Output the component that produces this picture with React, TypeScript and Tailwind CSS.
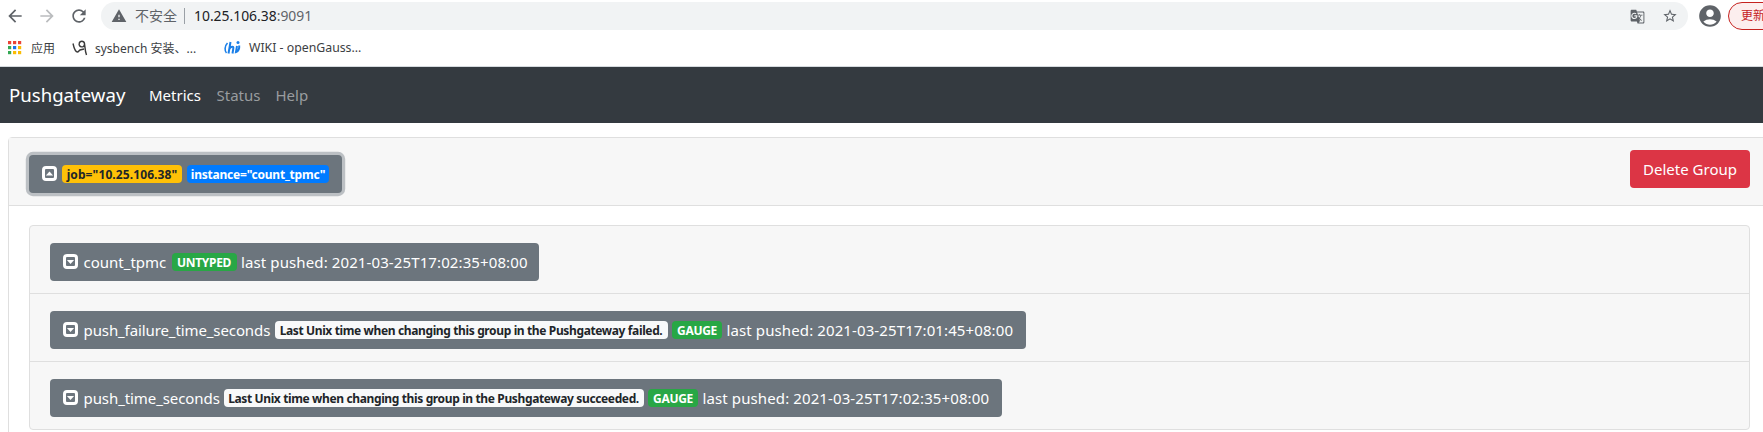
import { MdAccountCircle, MdArrowBack, MdArrowForward, MdGTranslate, MdRefresh, MdStarBorder, MdWarning } from "react-icons/md";

const latin = "font-['Noto_Sans','Noto_Sans_CJK_SC',sans-serif]";

function Caret({ up = false }: { up?: boolean }) {
  return (
    <svg viewBox="0 0 15 15" className="mb-px h-[15px] w-[15px] shrink-0">
      <rect x="1.5" y="1.5" width="12" height="12" rx="2.5" fill="none" stroke="#fff" strokeWidth="3" />
      <path d={up ? "M3.9 9.4h7.2L7.5 5.4z" : "M3.9 6h7.2L7.5 10z"} fill="#fff" />
    </svg>
  );
}

function Badge({ children, className }: { children: string; className: string }) {
  return (
    <span className={`flex h-[18px] shrink-0 items-center justify-center rounded-[4px] pt-px text-[12px] leading-none font-bold ${className}`}>
      {children}
    </span>
  );
}

const metrics = [
  { name: "count_tpmc", nameClass: "w-[88px]", help: "", helpClass: "", type: "UNTYPED", typeClass: "w-[65px]", time: "2021-03-25T17:02:35+08:00", width: "w-[489px]" },
  { name: "push_failure_time_seconds", nameClass: "w-[191px] tracking-[-0.1px]", help: "Last Unix time when changing this group in the Pushgateway failed.", helpClass: "w-[393px]", type: "GAUGE", typeClass: "w-[50px]", time: "2021-03-25T17:01:45+08:00", width: "w-[976px]" },
  { name: "push_time_seconds", nameClass: "w-[140px] tracking-[-0.08px]", help: "Last Unix time when changing this group in the Pushgateway succeeded.", helpClass: "w-[420px]", type: "GAUGE", typeClass: "w-[50px]", time: "2021-03-25T17:02:35+08:00", width: "w-[952px]" },
];

function Browser() {
  return (
    <div className="h-[67px] border-b border-[#d5dade] bg-white text-[#5f6368]">
      <div className="flex h-[32px] items-center">
        <MdArrowBack className="ml-[5px] size-5 shrink-0" />
        <MdArrowForward className="ml-3 size-5 shrink-0 text-[#babcbe]" />
        <MdRefresh className="ml-3 size-5 shrink-0" />
        <div className="ml-3 flex h-7 w-[1587px] shrink-0 items-center rounded-full bg-[#f1f3f4]">
          <MdWarning className="ml-[10px] size-4 shrink-0" />
          <span className="mb-[2px] ml-2 w-[43px] text-[14px]">不安全</span>
          <span className="ml-[6px] h-4 w-px bg-[#9aa0a6]" />
          <span className="ml-[9px] text-[13.9px] text-[#202124]">10.25.106.38<span className="text-[#5f6368]">:9091</span></span>
          <MdGTranslate className="ml-auto size-[15px]" />
          <MdStarBorder className="mr-[10px] ml-[17px] size-4" />
        </div>
        <MdAccountCircle className="ml-[9px] size-[26px] shrink-0" />
        <div className="ml-[5px] flex h-7 w-[80px] shrink-0 items-center rounded-full border border-[#c5221f] bg-[#fceeee] pl-3 text-[12px] text-[#c5221f]">更新</div>
      </div>
      <div className="flex h-[32px] items-center text-[12px] text-[#3c4043]">
        <svg viewBox="0 0 14 14" className="ml-[8px] h-[14px] w-[14px]">
          {["#ea4335", "#ea4335", "#ea4335", "#34a853", "#1a73e8", "#fbbc04", "#34a853", "#fbbc04", "#fbbc04"].map((c, i) => (
            <rect key={i} x={(i % 3) * 5} y={Math.floor(i / 3) * 5} width="3.2" height="3.2" fill={c} />
          ))}
        </svg>
        <span className="mt-px ml-[9px] w-[41px]">应用</span>
        <svg viewBox="0 0 16 16" className="h-4 w-4" fill="none" stroke="#3a3a3a" strokeWidth="1.4">
          <path d="M1 3.5C2 8 3 12 5.5 12C6.500 12 7 10.500 8 10L12 9M12.500 4A2.700 2.700 0 1 1 7.200 3.500A2.700 2.700 0 0 1 12.500 3.500C13 7 13 11 14.500 15" />
        </svg>
        <span className="mt-px ml-[7px] w-[129px]">sysbench 安装、...</span>
        <svg viewBox="0 0 17 16" className="h-4 w-[17px]" fill="none" stroke="#1a7fe8" strokeWidth="2">
          <path d="M3.500 3C.5 6 .5 11 2.500 13" strokeWidth="1.600" />
          <path d="M6.500 2L4.500 13.500M5.300 9C6.500 6.500 10 5.500 9.300 8.500L8.500 13.500M13 6L12 12C14.500 11 15.500 8.500 15.200 5.500" />
          <circle cx="14" cy="2.500" r="1.500" fill="#1a7fe8" stroke="none" />
        </svg>
        <span className="mt-px ml-[8px] text-[12.3px]">WIKI - openGauss...</span>
      </div>
    </div>
  );
}

export default function App() {
  return (
    <div className={`h-[432px] w-full overflow-hidden bg-white whitespace-nowrap ${latin}`}>
      <Browser />
      <nav className="flex h-14 items-center bg-[#343a40] text-[15px] text-[#999c9f]">
        <span className="ml-[9px] w-[140px] text-[18.6px] text-white">Pushgateway</span>
        <span className="w-[67.5px] text-white">Metrics</span>
        <span className="w-[59px]">Status</span>
        <span>Help</span>
      </nav>
      <main className="mt-[14px] ml-2 h-[400px] w-[1763px] rounded-[4px] border border-[#dfdfdf]">
        <header className="flex h-[68px] items-start border-b border-[#dfdfdf] bg-[#f7f7f7] pl-5">
          <button className="mt-[17px] flex h-[38px] w-[313px] items-center rounded-[4px] bg-[#6c757d] pl-[13px] text-white shadow-[0_0_0_3.2px_rgba(130,138,145,0.5)]">
            <Caret up />
            <Badge className="ml-[5px] w-[120px] bg-[#ffc107] tracking-[0.1px] text-[#212529]">job="10.25.106.38"</Badge>
            <Badge className="ml-[5px] w-[142px] bg-[#007bff] tracking-[-0.22px]">instance="count_tpmc"</Badge>
          </button>
          <button className="mt-3 ml-[1288px] h-[38px] w-[120px] shrink-0 rounded-[4px] bg-[#dc3545] text-[15px] text-white">Delete Group</button>
        </header>
        <section className="mt-[19px] ml-5 w-[1721px] overflow-hidden rounded-[4px] border border-[#dfdfdf] bg-[#f7f7f7]">
          {metrics.map((m) => (
            <div key={m.name} className="flex h-[68px] items-start border-b border-[#dfdfdf] pt-[17px] pl-5 last:h-[67px] last:border-b-0">
              <button className={`flex h-[38px] items-center rounded-[4px] bg-[#6c757d] pl-[13px] text-[15px] text-white ${m.width}`}>
                <Caret />
                <span className={`ml-[5.5px] shrink-0 text-left ${m.nameClass}`}>{m.name}</span>
                {m.help && <Badge className={`mr-[4.5px] bg-[#f8f9fa] tracking-[-0.37px] text-[#212529] ${m.helpClass}`}>{m.help}</Badge>}
                <Badge className={`bg-[#28a745] tracking-[-0.3px] ${m.typeClass}`}>{m.type}</Badge>
                <span className="ml-[4.5px] tracking-[0.11px]">last pushed: {m.time}</span>
              </button>
            </div>
          ))}
        </section>
      </main>
    </div>
  );
}
